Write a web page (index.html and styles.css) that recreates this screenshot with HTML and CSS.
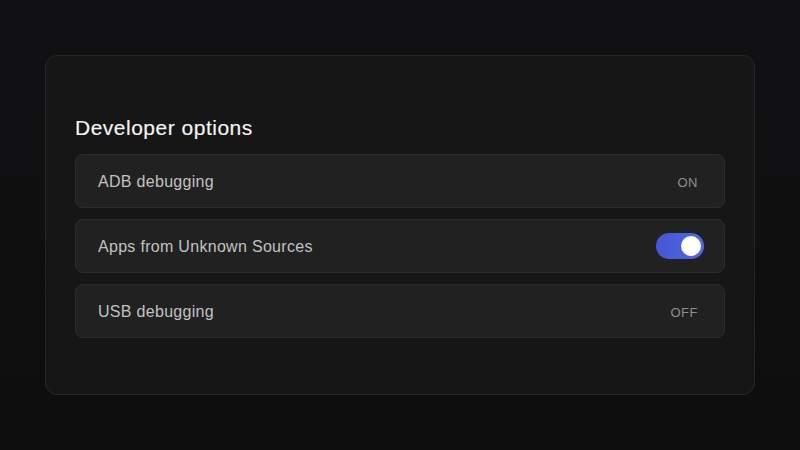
FILE: index.html
```html
<!DOCTYPE html>
<html>
<head>
<meta charset="utf-8">
<link rel="stylesheet" href="styles.css">
</head>
<body>
<div class="page">
  <section class="card">
    <h2 class="title">Developer options</h2>
    <div class="list">
      <div class="row"><span class="label">ADB debugging</span><span class="state">ON</span></div>
      <div class="row"><span class="label">Apps from Unknown Sources</span><span class="toggle"><span class="knob"></span></span></div>
      <div class="row"><span class="label">USB debugging</span><span class="state">OFF</span></div>
    </div>
  </section>
</div>
</body>
</html>
```
FILE: styles.css
```css
* { box-sizing: border-box; }
html, body { margin: 0; height: 100%; }
body {
  background: linear-gradient(180deg, #111113 0%, #0e0e0f 100%);
  font-family: "Liberation Sans", Arial, sans-serif;
}
.page {
  padding: 55px 45px;
  height: 450px;
}
.card {
  height: 340px;
  background: #161616;
  border: 1px solid #272727;
  border-radius: 12px;
  padding: 58px 29px 0 29px;
}
.title {
  margin: 0 0 12px 0;
  font-size: 21px;
  line-height: 28px;
  font-weight: 400;
  color: #f4f4f4;
  letter-spacing: 0.5px;
  -webkit-text-stroke: 0.15px #f4f4f4;
}
.list {
  display: flex;
  flex-direction: column;
  gap: 11px;
}
.row {
  height: 54px;
  display: flex;
  align-items: center;
  justify-content: space-between;
  background: #212121;
  border: 1px solid #2c2c2c;
  border-radius: 8px;
  padding: 2px 26px 0 22px;
}
.label {
  font-size: 16px;
  color: #c2c2c2;
  letter-spacing: 0.3px;
}
.state {
  font-size: 13px;
  color: #8e8e8e;
  letter-spacing: 0.5px;
}
.toggle {
  width: 48px;
  height: 26px;
  border-radius: 13px;
  background: linear-gradient(90deg, #4457d6, #5068e0);
  margin-right: -6px;
  margin-top: -2px;
  display: flex;
  align-items: center;
  justify-content: flex-end;
  padding-right: 3px;
}
.knob {
  width: 20px;
  height: 20px;
  border-radius: 50%;
  background: #ffffff;
}
```
